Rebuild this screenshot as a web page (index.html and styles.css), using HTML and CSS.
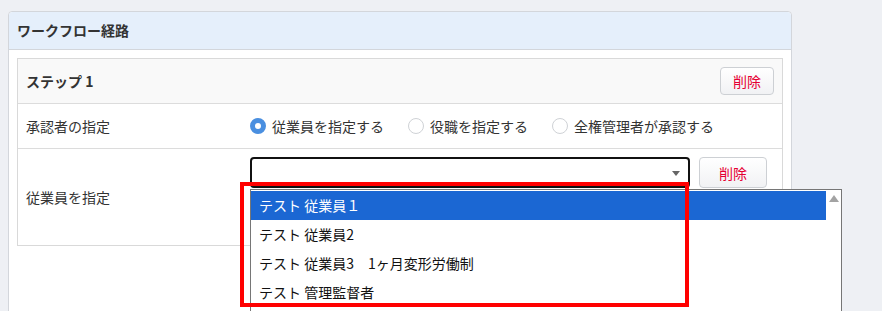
FILE: index.html
```html
<!DOCTYPE html>
<html lang="ja">
<head>
    <meta charset="UTF-8">
    <meta name="viewport" content="width=device-width, initial-scale=1.0">
    <title>ワークフロー経路</title>
    <link rel="stylesheet" href="styles.css">
</head>
<body>
    <div class="page">
        <div class="panel">
            <div class="panel-header">ワークフロー経路</div>
            <div class="panel-body">
                <div class="step-card">
                    <div class="step-header">
                        <span class="step-title">ステップ 1</span>
                        <button class="btn-delete">削除</button>
                    </div>
                    <div class="form-row">
                        <div class="form-label">承認者の指定</div>
                        <div class="form-value radios">
                            <label class="radio checked"><span class="radio-dot"></span>従業員を指定する</label>
                            <label class="radio"><span class="radio-dot"></span>役職を指定する</label>
                            <label class="radio"><span class="radio-dot"></span>全権管理者が承認する</label>
                        </div>
                    </div>
                    <div class="form-row tall">
                        <div class="form-label">従業員を指定</div>
                        <div class="form-value select-line">
                            <div class="select-wrap">
                                <div class="select-box"><span class="select-arrow"></span></div>
                                <ul class="dropdown">
                                    <li class="active">テスト 従業員１</li>
                                    <li>テスト 従業員2</li>
                                    <li>テスト 従業員3　1ヶ月変形労働制</li>
                                    <li>テスト 管理監督者</li>
                                </ul>
                                <div class="dropdown-scroll"><span class="scroll-up"></span></div>
                                <div class="highlight-box"></div>
                            </div>
                            <button class="btn-delete wide">削除</button>
                        </div>
                    </div>
                </div>
            </div>
        </div>
    </div>
</body>
</html>
```

FILE: styles.css
```css
body {
    margin: 0;
    background-color: #eef0f4;
    font-family: "Noto Sans CJK JP", "Noto Sans", sans-serif;
    font-size: 14px;
    color: #333;
    height: 311px;
    overflow: hidden;
}
.page {
    padding: 11px 0 0 8px;
}
.panel {
    width: 782px;
    background-color: #fff;
    border: 1px solid #d3d6db;
    border-radius: 4px;
    min-height: 340px;
}
.panel-header {
    height: 37px;
    line-height: 37px;
    padding-left: 8px;
    background-color: #e5effb;
    border-bottom: 1px solid #d3d6db;
    border-radius: 4px 4px 0 0;
    font-weight: bold;
}
.panel-body {
    padding: 8px;
}
.step-card {
    border: 1px solid #d9d9d9;
}
.step-header {
    display: flex;
    justify-content: space-between;
    align-items: center;
    height: 44px;
    padding: 0 8px;
    background-color: #f9f9f9;
    border-bottom: 1px solid #dcdcdc;
}
.step-title {
    font-weight: bold;
}
.btn-delete {
    font-family: inherit;
    font-size: 14px;
    color: #e60033;
    height: 28px;
    padding: 0 12px;
    background: linear-gradient(#ffffff, #f1f2f4);
    border: 1px solid #cdd0d4;
    border-radius: 4px;
    cursor: pointer;
}
.btn-delete.wide {
    height: 31px;
    width: 68px;
    padding: 0;
}
.form-row {
    display: grid;
    grid-template-columns: 232px 1fr;
    align-items: center;
    height: 44px;
    border-bottom: 1px solid #dcdcdc;
}
.form-row.tall {
    height: 96px;
    border-bottom: none;
}
.form-label {
    padding-left: 8px;
}
.radios {
    display: flex;
    gap: 24px;
}
.radio {
    display: flex;
    align-items: center;
    gap: 6px;
}
.radio-dot {
    box-sizing: border-box;
    width: 16px;
    height: 16px;
    border: 1px solid #cfd2d6;
    border-radius: 50%;
    background-color: #fff;
}
.radio.checked .radio-dot {
    border: 5px solid #4a8fe0;
}
.select-line {
    align-self: start;
    display: flex;
    gap: 9px;
    padding-top: 8px;
}
.select-wrap {
    position: relative;
}
.select-box {
    box-sizing: border-box;
    position: relative;
    width: 440px;
    height: 31px;
    border: 2px solid #111;
    border-radius: 4px;
}
.select-arrow {
    position: absolute;
    right: 8px;
    top: 12px;
    border-left: 4px solid transparent;
    border-right: 4px solid transparent;
    border-top: 5px solid #666;
}
.dropdown {
    position: absolute;
    left: 0;
    top: 32px;
    width: 575px;
    margin: 0;
    padding: 1px 0 40px;
    list-style: none;
    background-color: #fff;
    border: 1px solid #767676;
    border-right: none;
}
.dropdown li {
    height: 29px;
    line-height: 29px;
    padding-left: 8px;
    color: #111;
    white-space: pre;
}
.dropdown li.active {
    background-color: #1b67d3;
    color: #fff;
}
.dropdown-scroll {
    position: absolute;
    left: 576px;
    top: 32px;
    width: 15px;
    height: 160px;
    background-color: #fff;
    border: 1px solid #767676;
    border-left: none;
}
.scroll-up {
    position: absolute;
    left: 3px;
    top: 5px;
    border-left: 5px solid transparent;
    border-right: 5px solid transparent;
    border-bottom: 7px solid #a3a3a3;
}
.highlight-box {
    position: absolute;
    left: -10px;
    top: 25px;
    width: 441px;
    height: 117px;
    border: 4px solid #ff0000;
}
```
